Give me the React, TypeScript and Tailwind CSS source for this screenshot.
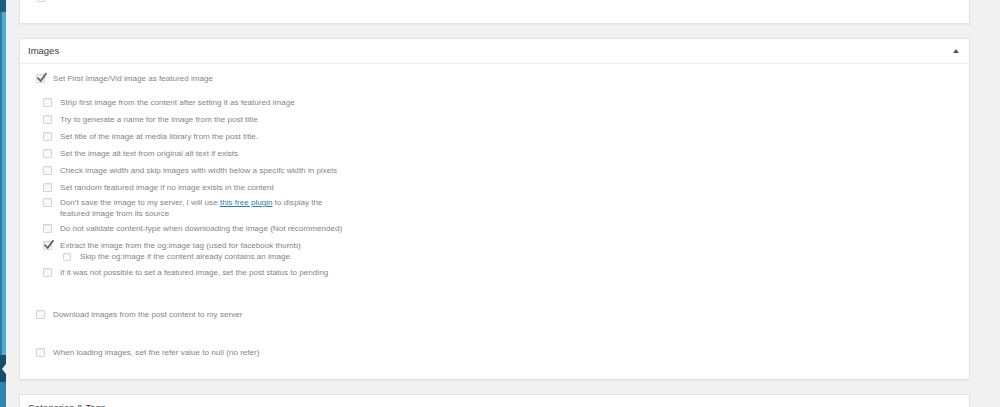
const font = "font-['Liberation_Sans',Arial,sans-serif]"

function Box({ checked = false, small = false }: { checked?: boolean; small?: boolean }) {
  return (
    <span
      className={`relative shrink-0 inline-block rounded-[1px] border border-[#d3d6d9] bg-[#f9f9f9] shadow-[inset_0_1px_1px_rgba(0,0,0,0.06)] ${
        small ? "w-[8px] h-[8px]" : "w-[9px] h-[9px]"
      }`}
    >
      {checked && (
        <svg className="absolute left-[-1px] top-[-3px]" width="12" height="12" viewBox="0 0 12 12">
          <path d="M2 6.2 L4.6 9 L10 1.8" fill="none" stroke="#5b6066" strokeWidth="1.8" strokeLinecap="round" strokeLinejoin="round" />
        </svg>
      )}
    </span>
  )
}

function Row({
  children,
  checked,
  className = "",
  textGap = "gap-[8px]",
  small,
}: {
  children: React.ReactNode
  checked?: boolean
  className?: string
  textGap?: string
  small?: boolean
}) {
  return (
    <div className={`flex items-start ${textGap} ${className}`}>
      <span className="h-[11px] flex items-center">
        <Box checked={checked} small={small} />
      </span>
      <span className="leading-[11px]">{children}</span>
    </div>
  )
}

function Caret() {
  return <span className="w-0 h-0 border-l-[3px] border-r-[3px] border-b-[4px] border-l-transparent border-r-transparent border-b-[#555]" />
}

export default function App() {
  const nested = [
    "Strip first image from the content after setting it as featured image",
    "Try to generate a name for the image from the post title",
    "Set title of the image at media library from the post title.",
    "Set the image alt text from original alt text if exists",
    "Check image width and skip images with width below a specifc width in pixels",
    "Set random featured image if no image exists in the content",
  ]

  return (
    <div className={`w-[1000px] h-[407px] overflow-hidden bg-[#f1f1f1] flex text-[8.1px] text-[#858585] ${font}`}>
      {/* admin menu edge */}
      <div className="w-[6px] h-full flex flex-col shrink-0">
        <div className="h-[12px] bg-[#1d5f80]" />
        <div className="flex-1 flex">
          <div className="w-[2px] bg-[#2a7ca3]" />
          <div className="flex-1 bg-[#4fadd4]" />
        </div>
        <div className="h-[27px] bg-[#164f6b] flex items-center justify-end">
          <span className="w-0 h-0 border-t-[5px] border-b-[5px] border-r-[4px] border-t-transparent border-b-transparent border-r-[#f1f1f1]" />
        </div>
        <div className="h-[25px] bg-[#2d86b0]" />
      </div>

      <div className="flex-1 pl-[13px] pr-[30px]">
        {/* previous panel, cut off */}
        <div className="h-[24px] bg-white border border-t-0 border-[#e3e3e3] shadow-[0_1px_1px_rgba(0,0,0,0.04)] overflow-hidden">
          <div className="mt-[-7px] pl-[17px]">
            <Box />
          </div>
        </div>

        {/* Images */}
        <div className="mt-[14px] bg-white border border-[#e3e3e3] shadow-[0_1px_1px_rgba(0,0,0,0.04)]">
          <div className="h-[25px] border-b border-[#eeeeee] flex items-center justify-between pl-[8px] pr-[10px]">
            <span className="text-[9.5px] font-medium text-[#3a3d40]">Images</span>
            <Caret />
          </div>
          <div className="pt-[9px] pb-[21px] pl-[16px]">
            <Row checked>Set First Image/Vid image as featured image</Row>

            <div className="mt-[13px] pl-[7px] flex flex-col">
              {nested.map((t, i) => (
                <Row key={t} className={i === 0 ? "" : "mt-[6px]"}>
                  {t}
                </Row>
              ))}
              <Row className="mt-[4px]">
                Don't save the image to my server, I will use{" "}
                <span className="text-[#2a7fb0] underline">this free plugin</span> to display the
                <br />
                featured image from its source
              </Row>
              <Row className="mt-[4px]">Do not validate content-type when downloading the image (Not recommended)</Row>
              <Row className="mt-[6px]" checked>
                Extract the image from the og:image tag (used for facebook thumb)
              </Row>
              <div className="pl-[20px]">
                <Row small textGap="gap-[9px]">
                  Skip the og:image if the content already contains an image.
                </Row>
              </div>
              <Row className="mt-[5px]">If it was not possible to set a featured image, set the post status to pending</Row>
            </div>

            <Row className="mt-[31px]">Download images from the post content to my server</Row>
            <Row className="mt-[27px]">When loading images, set the refer value to null (no refer)</Row>
          </div>
        </div>

        {/* next panel */}
        <div className="mt-[14px] h-[40px] bg-white border border-[#e3e3e3]">
          <div className="h-[25px] flex items-center justify-between pl-[8px] pr-[10px] pt-[2px]">
            <span className="text-[9.5px] font-medium text-[#3a3d40]">Categories &amp; Tags</span>
            <Caret />
          </div>
        </div>
      </div>
    </div>
  )
}
